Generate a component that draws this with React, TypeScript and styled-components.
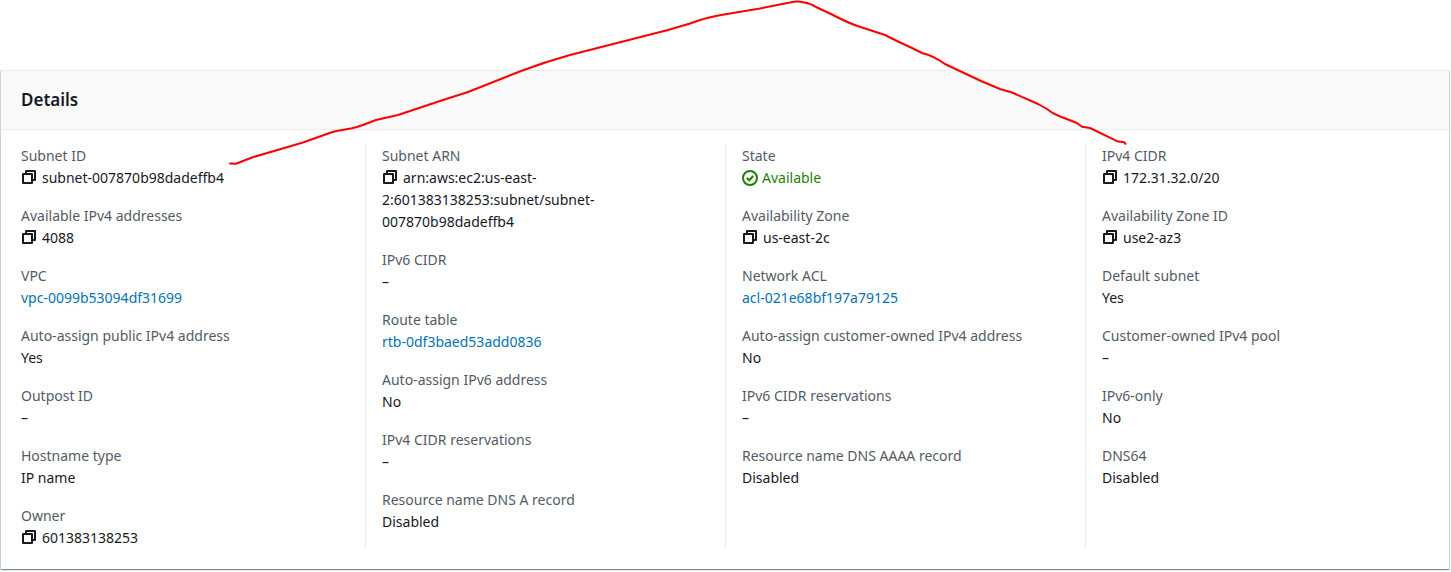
import React from "react";
import styled, { createGlobalStyle } from "styled-components";

const GlobalStyle = createGlobalStyle`
  *, *::before, *::after { box-sizing: border-box; }
  body {
    margin: 0;
    background: #fff;
    color: #16191f;
    font-family: "Noto Sans", "Open Sans", sans-serif;
    font-size: 14px;
    line-height: 22px;
  }
`;

const Page = styled.main`
  position: relative;
  padding: 70px 2px 2px 1px;
`;

const Card = styled.section`
  background: #fff;
  border-top: 1px solid #eaeded;
  box-shadow:
    0 1px 1px 0 rgba(0, 28, 36, 0.3),
    1px 1px 1px 0 rgba(0, 28, 36, 0.15),
    -1px 1px 1px 0 rgba(0, 28, 36, 0.15);
`;

const CardHeader = styled.header`
  padding: 18px 20px;
  background: #fafafa;
  border-bottom: 1px solid #eaeded;
`;

const Title = styled.h2`
  margin: 0;
  font-size: 17px;
  font-weight: 600;
  line-height: 22px;
`;

const Columns = styled.div`
  display: grid;
  grid-template-columns: repeat(4, minmax(0, 1fr));
  padding: 15px 4px 20px;
`;

const Column = styled.dl`
  display: flex;
  flex-direction: column;
  gap: 16px;
  margin: 0;
  padding: 0 16px;

  & + & {
    border-left: 1px solid #eaeded;
  }
`;

const Label = styled.dt`
  color: #545b64;
`;

const Value = styled.dd`
  margin: 0;
`;

const Link = styled.a`
  color: #0073bb;
  text-decoration: none;
`;

const CopyButton = styled.button`
  width: 16px;
  height: 16px;
  margin: 0 5px 0 0;
  padding: 0;
  border: 0;
  background: none;
  color: inherit;
  vertical-align: -2px;
  cursor: pointer;

  svg { display: block; }
`;

const Status = styled.span`
  display: flex;
  align-items: center;
  gap: 4px;
  color: #1d8102;
`;

const Annotation = styled.svg`
  position: absolute;
  top: 0;
  left: 0;
  pointer-events: none;
`;

const CopyIcon = () => (
  <svg width="16" height="16" viewBox="0 0 16 16" fill="none" stroke="currentColor" strokeWidth="2" strokeLinejoin="round" aria-hidden="true">
    <path d="M2 5h9v9H2z" />
    <path d="M5 5V2h9v9h-3" />
  </svg>
);

const CheckIcon = () => (
  <svg width="16" height="16" viewBox="0 0 16 16" fill="none" stroke="currentColor" strokeWidth="2" aria-hidden="true">
    <circle cx="8" cy="8" r="7" />
    <path d="M4.8 7.8l2.4 2.4 4-4.2" />
  </svg>
);

type Kind = "text" | "copy" | "link" | "status";
type Item = { label: string; value: string; kind?: Kind };

const columns: Item[][] = [
  [
    { label: "Subnet ID", value: "subnet-007870b98dadeffb4", kind: "copy" },
    { label: "Available IPv4 addresses", value: "4088", kind: "copy" },
    { label: "VPC", value: "vpc-0099b53094df31699", kind: "link" },
    { label: "Auto-assign public IPv4 address", value: "Yes" },
    { label: "Outpost ID", value: "–" },
    { label: "Hostname type", value: "IP name" },
    { label: "Owner", value: "601383138253", kind: "copy" },
  ],
  [
    { label: "Subnet ARN", value: "arn:aws:ec2:us-east-2:601383138253:subnet/subnet-007870b98dadeffb4", kind: "copy" },
    { label: "IPv6 CIDR", value: "–" },
    { label: "Route table", value: "rtb-0df3baed53add0836", kind: "link" },
    { label: "Auto-assign IPv6 address", value: "No" },
    { label: "IPv4 CIDR reservations", value: "–" },
    { label: "Resource name DNS A record", value: "Disabled" },
  ],
  [
    { label: "State", value: "Available", kind: "status" },
    { label: "Availability Zone", value: "us-east-2c", kind: "copy" },
    { label: "Network ACL", value: "acl-021e68bf197a79125", kind: "link" },
    { label: "Auto-assign customer-owned IPv4 address", value: "No" },
    { label: "IPv6 CIDR reservations", value: "–" },
    { label: "Resource name DNS AAAA record", value: "Disabled" },
  ],
  [
    { label: "IPv4 CIDR", value: "172.31.32.0/20", kind: "copy" },
    { label: "Availability Zone ID", value: "use2-az3", kind: "copy" },
    { label: "Default subnet", value: "Yes" },
    { label: "Customer-owned IPv4 pool", value: "–" },
    { label: "IPv6-only", value: "No" },
    { label: "DNS64", value: "Disabled" },
  ],
];

const ItemValue = ({ label, value, kind }: Item) => {
  if (kind === "copy") {
    return (
      <>
        <CopyButton type="button" aria-label={`Copy ${label}`}>
          <CopyIcon />
        </CopyButton>
        {value}
      </>
    );
  }
  if (kind === "link") return <Link href="#">{value}</Link>;
  if (kind === "status") {
    return (
      <Status>
        <CheckIcon />
        {value}
      </Status>
    );
  }
  return <>{value}</>;
};

export default function App() {
  return (
    <>
      <GlobalStyle />
      <Page>
        <Card aria-labelledby="details-title">
          <CardHeader>
            <Title id="details-title">Details</Title>
          </CardHeader>
          <Columns>
            {columns.map((items, index) => (
              <Column key={index}>
                {items.map((item) => (
                  <div key={item.label}>
                    <Label>{item.label}</Label>
                    <Value>
                      <ItemValue {...item} />
                    </Value>
                  </div>
                ))}
              </Column>
            ))}
          </Columns>
        </Card>
        <Annotation width="1140" height="180" viewBox="0 0 1140 180" fill="none" stroke="#fe0000" strokeWidth="2" strokeLinecap="round" strokeLinejoin="round" aria-hidden="true">
          <path d="M230 163.500L236 163.700L252 157.500L303 142.500L331 132.500Q337 130.800 352 128.300Q361 126 376 120L398 115L440 101L468 92L521 71Q545 62 570 55L668 30L690 23.500Q707 17 727 14L760 8.500L790 2.500Q797 0.800 803 2.200Q810 3 816 7L832 14.500Q850 24 862 27.500L885 35L897 41L912 48L922 53Q934 56 945 64L981 81L1000 89L1012 92.500L1038 104L1047 109Q1053 114 1059 116L1077 123L1082 126.700L1090 128L1117 141.200L1124 142.300L1125.500 143.700" />
        </Annotation>
      </Page>
    </>
  );
}
